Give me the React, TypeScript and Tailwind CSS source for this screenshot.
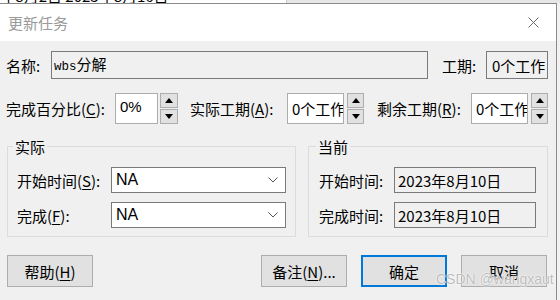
import React from "react";

function Mn({ children }: { children: React.ReactNode }) {
    return <span className="underline underline-offset-2 decoration-1">{children}</span>;
}

function Spinner() {
    return (
        <div className="flex flex-col gap-px h-[31px]">
            <div className="flex-1 flex items-center justify-center bg-[#e1e1e1] border border-[#adadad]">
                <svg width="8" height="5" viewBox="0 0 8 5"><polygon points="0,5 8,5 4,0" fill="#000" /></svg>
            </div>
            <div className="flex-1 flex items-center justify-center bg-[#e1e1e1] border border-[#adadad]">
                <svg width="8" height="5" viewBox="0 0 8 5"><polygon points="0,0 8,0 4,5" fill="#000" /></svg>
            </div>
        </div>
    );
}

function Combo() {
    return (
        <div className="w-[175px] h-[26px] bg-white border border-[#7a7a7a] flex items-center justify-between pl-[4px] pr-[7px]">
            <span className="font-['Liberation_Sans',sans-serif] text-[16px]">NA</span>
            <svg width="10" height="6" viewBox="0 0 10 6"><polyline points="0.5,0.5 5,5 9.5,0.5" fill="none" stroke="#555" strokeWidth="1" /></svg>
        </div>
    );
}

function DateBox() {
    return (
        <div className="w-[142px] h-[26px] bg-[#f0f0f0] border border-[#7a7a7a] flex items-center pl-[3px]">2023年8月10日</div>
    );
}

function Btn({ children, focus = false }: { children: React.ReactNode; focus?: boolean }) {
    return (
        <div className={`w-[86px] h-[32px] flex items-center justify-center bg-[#e1e1e1] ${focus ? "border-2 border-[#0078d7]" : "border border-[#adadad]"}`}>
            {children}
        </div>
    );
}

export default function App() {
    return (
        <div className="relative w-[560px] h-[300px] overflow-hidden bg-[#f2f2f2] font-['Noto_Sans_CJK_SC',sans-serif] text-[15px] text-black leading-none">
            <div className="h-[3px] overflow-hidden flex">
                <div className="w-[287px] bg-white overflow-hidden border-r border-[#c8c8c8]">
                    <div className="mt-[-12px] -ml-[8px] whitespace-nowrap">3年8月2日 2023年8月16日</div>
                </div>
                <div className="flex-1 bg-[#e6e6e6]" />
            </div>

            <div className="w-[557px] h-[297px] border-t border-r border-[#8a8a8a] flex flex-col">
                <div className="h-[37px] bg-white flex items-center justify-between pl-[8px] pr-[17px]">
                    <span className="text-[#9a9a9a]">更新任务</span>
                    <svg width="11" height="11" viewBox="0 0 11 11">
                        <path d="M0.5 0.5 L10.5 10.5 M10.5 0.5 L0.5 10.5" stroke="#6a6a6a" strokeWidth="1" />
                    </svg>
                </div>

                <div className="flex-1 bg-[#f0f0f0] pt-[10px]">
                    <div className="flex items-center h-[28px] pl-[6px]">
                        <span className="w-[45px]">名称:</span>
                        <div className="w-[377px] h-[28px] bg-[#f0f0f0] border border-[#7a7a7a] flex items-center pl-[2px]">
                            <span><span className="font-['Liberation_Mono',monospace] text-[12.5px]">wbs</span>分解</span>
                        </div>
                        <span className="ml-[14px] w-[44px]">工期:</span>
                        <div className="w-[62px] h-[28px] border border-[#7a7a7a] flex items-center pl-[5px] overflow-hidden whitespace-nowrap">0个工作</div>
                    </div>

                    <div className="flex items-center h-[31px] mt-[14px] pl-[6px]">
                        <span className="w-[109px]">完成百分比(<Mn>C</Mn>):</span>
                        <div className="w-[43px] h-[31px] bg-white border border-[#acacac] flex items-center pl-[4px] pb-[4px] font-['Liberation_Sans',sans-serif]">0%</div>
                        <div className="ml-[2px] w-[18px]"><Spinner /></div>
                        <span className="ml-[12px] w-[97px]">实际工期(<Mn>A</Mn>):</span>
                        <div className="w-[57px] h-[31px] bg-white border border-[#acacac] flex items-center pl-[4px] overflow-hidden whitespace-nowrap">0个工作</div>
                        <div className="ml-[3px] w-[17px]"><Spinner /></div>
                        <span className="ml-[13px] w-[94px]">剩余工期(<Mn>R</Mn>):</span>
                        <div className="w-[57px] h-[31px] bg-white border border-[#acacac] flex items-center pl-[4px] overflow-hidden whitespace-nowrap">0个工作</div>
                        <div className="ml-[3px] w-[17px]"><Spinner /></div>
                    </div>

                    <div className="flex mt-[15px] pl-[7px] gap-[12px]">
                        <fieldset className="w-[289px] border border-[#dcdcdc] pl-[9px] pt-[13px] pb-[8px] flex flex-col gap-[9px]">
                            <legend className="-ml-[4px] px-[2px] leading-[15px]">实际</legend>
                            <div className="flex items-center">
                                <span className="w-[94px]">开始时间(<Mn>S</Mn>):</span>
                                <Combo />
                            </div>
                            <div className="flex items-center">
                                <span className="w-[94px]">完成(<Mn>F</Mn>):</span>
                                <Combo />
                            </div>
                        </fieldset>
                        <fieldset className="w-[240px] border border-[#dcdcdc] pl-[10px] pt-[13px] pb-[8px] flex flex-col gap-[9px]">
                            <legend className="-ml-[3px] px-[2px] leading-[15px]">当前</legend>
                            <div className="flex items-center">
                                <span className="w-[75px]">开始时间:</span>
                                <DateBox />
                            </div>
                            <div className="flex items-center">
                                <span className="w-[75px]">完成时间:</span>
                                <DateBox />
                            </div>
                        </fieldset>
                    </div>

                    <div className="flex items-center mt-[18px] pl-[7px] pr-[9px]">
                        <Btn>帮助(<Mn>H</Mn>)</Btn>
                        <div className="flex-1" />
                        <div className="flex gap-[14px]">
                            <Btn>备注(<Mn>N</Mn>)...</Btn>
                            <Btn focus>确定</Btn>
                            <Btn>取消</Btn>
                        </div>
                    </div>
                </div>
            </div>

            <div className="absolute left-[436px] top-[272px] font-['Liberation_Sans',sans-serif] text-[14px] text-[#bdbdbd] [text-shadow:0_0_2px_#fff,0_0_1px_#fff] whitespace-nowrap">
                CSDN @wangxaut
            </div>
        </div>
    );
}
